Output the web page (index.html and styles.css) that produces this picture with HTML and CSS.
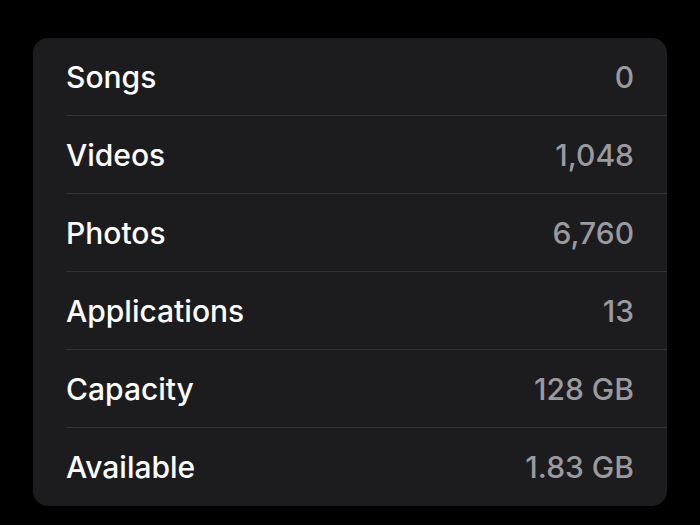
FILE: index.html
```html
<!DOCTYPE html>
<html>
<head>
<meta charset="utf-8">
<link rel="stylesheet" href="styles.css">
</head>
<body>
<div class="card">
  <div class="row"><span class="label">Songs</span><span class="value">0</span></div>
  <div class="row"><span class="label">Videos</span><span class="value">1,048</span></div>
  <div class="row"><span class="label">Photos</span><span class="value">6,760</span></div>
  <div class="row"><span class="label">Applications</span><span class="value">13</span></div>
  <div class="row"><span class="label">Capacity</span><span class="value">128 GB</span></div>
  <div class="row"><span class="label">Available</span><span class="value">1.83 GB</span></div>
</div>
</body>
</html>
```
FILE: styles.css
```css
html, body {
  margin: 0;
  padding: 0;
  background: #000;
  height: 525px;
  overflow: hidden;
}
body {
  padding: 38px 33px 0 33px;
  box-sizing: border-box;
  font-family: Inter, "Noto Sans", sans-serif;
}
.card {
  background: #1c1c1e;
  border-radius: 15px;
  padding-left: 33px;
  display: flex;
  flex-direction: column;
}
.row {
  height: 77px;
  display: flex;
  align-items: center;
  justify-content: space-between;
  padding-right: 33px;
  border-bottom: 1px solid #333336;
}
.row:last-child {
  border-bottom: none;
  height: 78px;
}
.label {
  color: #fff;
  font-size: 30px;
  font-weight: 500;
}
.value {
  color: #9a9a9f;
  font-size: 30px;
  font-weight: 500;
}
```
